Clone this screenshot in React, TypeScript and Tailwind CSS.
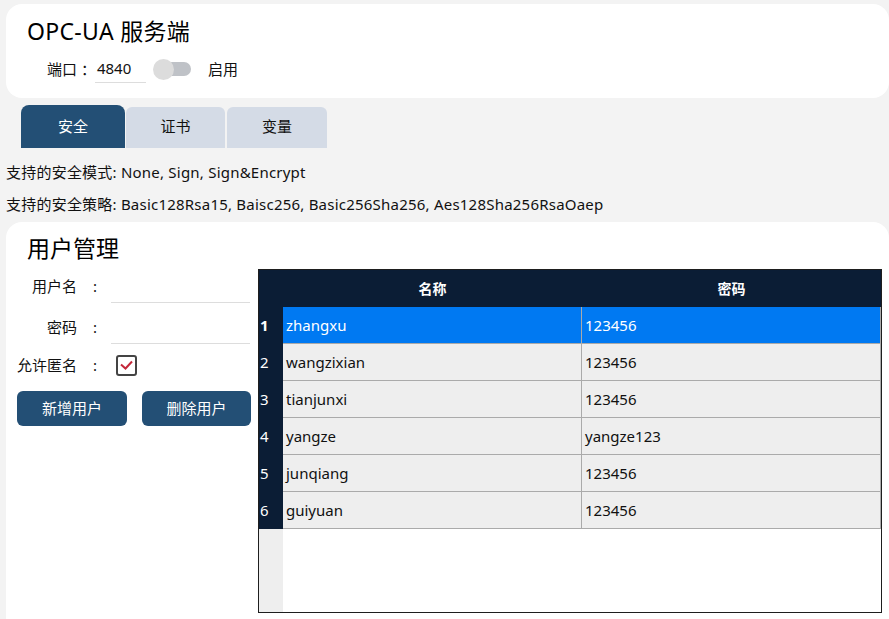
import React from "react";

const font = { fontFamily: '"Noto Sans", "Noto Sans CJK SC", sans-serif' };

const users = [
  ["zhangxu", "123456"],
  ["wangzixian", "123456"],
  ["tianjunxi", "123456"],
  ["yangze", "yangze123"],
  ["junqiang", "123456"],
  ["guiyuan", "123456"],
];

export default function App() {
  return (
    <div
      className="w-[889px] h-[619px] overflow-hidden bg-[#f3f3f3] text-[#111] flex flex-col pt-[4px]"
      style={font}
    >
      {/* Top card */}
      <div className="ml-[6px] h-[94px] bg-white rounded-[16px] pl-[21px] pt-[12px] shrink-0">
        <div className="text-[23px] leading-[30px] text-black tracking-[0.3px]">OPC-UA 服务端</div>
        <div className="flex items-center mt-[9px] pl-[20px] h-[28px] text-[15px]">
          <span>端口 ：</span>
          <div className="w-[51px] h-[28px] border-b border-[#dddddd] flex items-center pl-[2px] -ml-[1px]">
            4840
          </div>
          <div className="relative ml-[7px] w-[38px] h-[21px] flex items-center">
            <div className="absolute left-[12px] right-0 h-[14px] rounded-full bg-[#bfc2c7]" />
            <div className="absolute left-0 w-[21px] h-[21px] rounded-full bg-[#dcdcdc]" />
          </div>
          <span className="ml-[17px]">启用</span>
        </div>
      </div>

      {/* Tabs */}
      <div className="flex items-end pl-[21px] mt-[7px] h-[43px] shrink-0 text-[15px]">
        <div className="w-[104px] h-[43px] rounded-t-[8px] bg-[#234f75] text-white flex items-center justify-center">
          安全
        </div>
        <div className="ml-[1px] w-[99px] h-[41px] rounded-t-[6px] bg-[#d4dbe6] flex items-center justify-center pb-[2px]">
          证书
        </div>
        <div className="ml-[2px] w-[100px] h-[41px] rounded-t-[6px] bg-[#d4dbe6] flex items-center justify-center pb-[2px]">
          变量
        </div>
      </div>

      <div className="pl-[6px] text-[15px] leading-[20px] mt-[14px] whitespace-nowrap tracking-[0.22px]">
        支持的安全模式: None, Sign, Sign&amp;Encrypt
      </div>
      <div className="pl-[6px] text-[15px] leading-[20px] mt-[12px] whitespace-nowrap tracking-[0.22px]">
        支持的安全策略: Basic128Rsa15, Baisc256, Basic256Sha256, Aes128Sha256RsaOaep
      </div>

      {/* User management card */}
      <div className="ml-[6px] mt-[8px] flex-1 bg-white rounded-t-[16px] flex flex-col">
        <div className="pl-[21px] pt-[11px] text-[23px] leading-[30px] text-black">用户管理</div>
        <div className="flex mt-[6px]">
          {/* Form */}
          <div className="w-[252px] pl-[11px] text-[15px]">
            <div className="flex items-center h-[34px]">
              <span className="w-[60px] text-right">用户名</span>
              <span className="w-[34px] pl-[16px]">:</span>
              <div className="w-[139px] h-[28px] border-b border-[#dddddd] self-end" />
            </div>
            <div className="flex items-center h-[41px] pt-[7px]">
              <span className="w-[60px] text-right">密码</span>
              <span className="w-[34px] pl-[16px]">:</span>
              <div className="w-[139px] h-[28px] border-b border-[#dddddd] self-end" />
            </div>
            <div className="flex items-center h-[34px] mt-[4px]">
              <span className="w-[60px] text-right">允许匿名</span>
              <span className="w-[39px] pl-[16px]">:</span>
              <div className="w-[21px] h-[21px] rounded-[3px] border-2 border-[#444] flex items-center justify-center">
                <svg width="15" height="12" viewBox="0 0 15 12">
                  <path d="M2 5.5 L6.5 9.5 L13 2.5" stroke="#c4283a" strokeWidth="2" fill="none" />
                </svg>
              </div>
            </div>
            <div className="flex mt-[9px] gap-[15px]">
              <button className="w-[110px] h-[35px] rounded-[6px] bg-[#234f75] text-white text-[15px]">
                新增用户
              </button>
              <button className="w-[109px] h-[35px] rounded-[6px] bg-[#234f75] text-white text-[15px]">
                删除用户
              </button>
            </div>
          </div>

          {/* Table */}
          <div className="w-[624px] h-[344px] border border-[#1e1e1e] flex flex-col text-[15px]">
            <div className="flex h-[37px] bg-[#0b1d35] text-white font-bold shrink-0 text-[14px]">
              <div className="w-[24px]" />
              <div className="w-[299px] flex items-center justify-center">名称</div>
              <div className="flex-1 flex items-center justify-center">密码</div>
            </div>
            {users.map(([n, p], i) => {
              const sel = i === 0;
              return (
                <div key={i} className="flex h-[37px] shrink-0">
                  <div
                    className={`w-[24px] bg-[#0b1d35] text-white flex items-center pl-[1px] ${sel ? "font-bold" : ""}`}
                  >
                    {i + 1}
                  </div>
                  <div
                    className={`w-[299px] flex items-center pl-[3px] border-b border-r border-[#aaaaaa] ${sel ? "bg-[#0079f2] text-white" : "bg-[#eeeeee]"}`}
                  >
                    {n}
                  </div>
                  <div
                    className={`flex-1 flex items-center pl-[3px] border-b border-r border-[#aaaaaa] ${sel ? "bg-[#0079f2] text-white" : "bg-[#eeeeee]"}`}
                  >
                    {p}
                  </div>
                </div>
              );
            })}
            <div className="flex flex-1">
              <div className="w-[24px] bg-[#eeeeee]" />
              <div className="flex-1 bg-white" />
            </div>
          </div>
        </div>
      </div>
    </div>
  );
}
